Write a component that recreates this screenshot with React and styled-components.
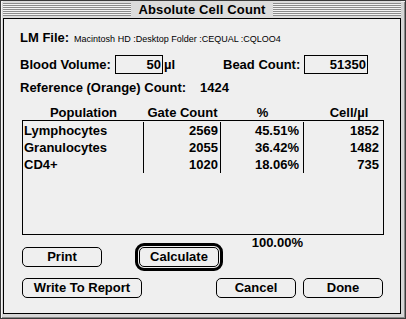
import React from "react";
import styled, { createGlobalStyle } from "styled-components";

const Global = createGlobalStyle`
  * { box-sizing: border-box; }
  html, body { margin: 0; padding: 0; background: #ffffff; }
  body { font-family: "Liberation Sans", Arial, sans-serif; color: #000; }
`;

const Window = styled.div`
  width: 406px;
  height: 319px;
  border: 1px solid #3a3a3a;
  background: #d6d6d6;
  box-shadow: inset 1px 1px 0 #f4f4f4, inset -1px -1px 0 #8a8a8a;
  padding: 0 4px 4px 2px;
  display: flex;
  flex-direction: column;
`;

const TitleBar = styled.div`
  height: 17px;
  display: flex;
  align-items: center;
  background: #dcdcdc;
`;

const Stripes = styled.div`
  flex: 1;
  height: 13px;
  background: repeating-linear-gradient(
    to bottom,
    #8c8c8c 0px,
    #8c8c8c 1px,
    #f4f4f4 1px,
    #f4f4f4 2px
  );
`;

const Title = styled.div`
  padding: 0 7px;
  font-size: 13px;
  font-weight: bold;
  line-height: 17px;
  letter-spacing: 0.15px;
  white-space: nowrap;
`;

const Content = styled.div`
  flex: 1;
  border: 1px solid #000;
  background: #efefef;
  padding: 11px 17px 0 16px;
  display: flex;
  flex-direction: column;
  font-size: 13px;
  font-weight: bold;
`;

const FileLine = styled.div`
  display: flex;
  align-items: baseline;
  line-height: 16px;
  white-space: nowrap;
`;

const Path = styled.span`
  margin-left: 5px;
  font-size: 9px;
  font-weight: normal;
`;

const ValueRow = styled.div`
  margin-top: 8px;
  height: 19px;
  display: flex;
  align-items: center;
  line-height: 16px;
  white-space: nowrap;
`;

const Label = styled.span`
  width: ${(p) => p.$w}px;
  flex: none;
`;

const Field = styled.div`
  width: ${(p) => p.$w}px;
  height: 19px;
  flex: none;
  border: 1px solid #000;
  background: #efefef;
  text-align: right;
  padding-right: 1px;
  line-height: 17px;
`;

const Unit = styled.span`
  width: ${(p) => p.$w}px;
  flex: none;
  padding-left: 1px;
`;

const RefLine = styled.div`
  margin-top: 6px;
  display: flex;
  line-height: 16px;
  white-space: nowrap;
`;

const cols = "121px 77px 83px 79px";

const HeaderRow = styled.div`
  margin-top: 9px;
  margin-left: 3px;
  width: 360px;
  display: grid;
  grid-template-columns: ${cols};
  line-height: 15px;
`;

const HeaderCell = styled.div`
  text-align: center;
  padding-left: ${(p) => p.$shift || 0}px;
  white-space: nowrap;
`;

const Table = styled.div`
  margin-left: 2px;
  width: 362px;
  height: 115px;
  border: 1px solid #000;
  padding-top: 1px;
  display: flex;
  flex-direction: column;
`;

const Row = styled.div`
  display: grid;
  grid-template-columns: ${cols};
  height: ${(p) => (p.$last ? 13 : 17)}px;
  line-height: 17px;
`;

const Cell = styled.div`
  border-right: ${(p) => (p.$end ? "none" : "1px solid #000")};
  text-align: ${(p) => (p.$left ? "left" : "right")};
  padding-left: ${(p) => (p.$left ? 1 : 0)}px;
  padding-right: ${(p) => p.$pr || 0}px;
  white-space: nowrap;
`;

const TotalRow = styled.div`
  margin-left: 2px;
  width: 281px;
  text-align: right;
  line-height: 16px;
`;

const ButtonRow = styled.div`
  margin-left: 2px;
  margin-top: ${(p) => p.$mt}px;
  height: 28px;
  display: flex;
  align-items: center;
`;

const Button = styled.div`
  width: ${(p) => p.$w}px;
  height: 20px;
  flex: none;
  margin-left: ${(p) => p.$ml || 0}px;
  border: 1px solid #000;
  border-radius: 5px;
  background: #efefef;
  text-align: center;
  line-height: 18px;
  font-size: 13px;
  font-weight: bold;
  white-space: nowrap;
`;

const DefaultRing = styled.div`
  margin-left: ${(p) => p.$ml || 0}px;
  border: 3px solid #000;
  border-radius: 9px;
  padding: 1px;
  flex: none;
  display: flex;
`;

const rows = [
  ["Lymphocytes", "2569", "45.51%", "1852"],
  ["Granulocytes", "2055", "36.42%", "1482"],
  ["CD4+", "1020", "18.06%", "735"],
];

export default function App() {
  return (
    <>
      <Global />
      <Window>
        <TitleBar>
          <Stripes />
          <Title>Absolute Cell Count</Title>
          <Stripes />
        </TitleBar>
        <Content>
          <FileLine>
            LM File:
            <Path>Macintosh HD :Desktop Folder :CEQUAL :CQLOO4</Path>
          </FileLine>
          <ValueRow>
            <Label $w={95}>Blood Volume:</Label>
            <Field $w={48}>50</Field>
            <Unit $w={60}>µl</Unit>
            <Label $w={81}>Bead Count:</Label>
            <Field $w={64}>51350</Field>
          </ValueRow>
          <RefLine>
            <Label $w={180}>Reference (Orange) Count:</Label>
            <span>1424</span>
          </RefLine>
          <HeaderRow>
            <HeaderCell>Population</HeaderCell>
            <HeaderCell>Gate Count</HeaderCell>
            <HeaderCell>%</HeaderCell>
            <HeaderCell $shift={11}>Cell/µl</HeaderCell>
          </HeaderRow>
          <Table>
            {rows.map((r, i) => (
              <Row key={r[0]} $last={i === rows.length - 1}>
                <Cell $left>{r[0]}</Cell>
                <Cell $pr={2}>{r[1]}</Cell>
                <Cell $pr={4}>{r[2]}</Cell>
                <Cell $pr={4} $end>{r[3]}</Cell>
              </Row>
            ))}
          </Table>
          <TotalRow>100.00%</TotalRow>
          <ButtonRow $mt={-8}>
            <Button $w={80}>Print</Button>
            <DefaultRing $ml={33}>
              <Button $w={80}>Calculate</Button>
            </DefaultRing>
          </ButtonRow>
          <ButtonRow $mt={3}>
            <Button $w={120}>Write To Report</Button>
            <Button $w={80} $ml={74}>Cancel</Button>
            <Button $w={80} $ml={7}>Done</Button>
          </ButtonRow>
        </Content>
      </Window>
    </>
  );
}
